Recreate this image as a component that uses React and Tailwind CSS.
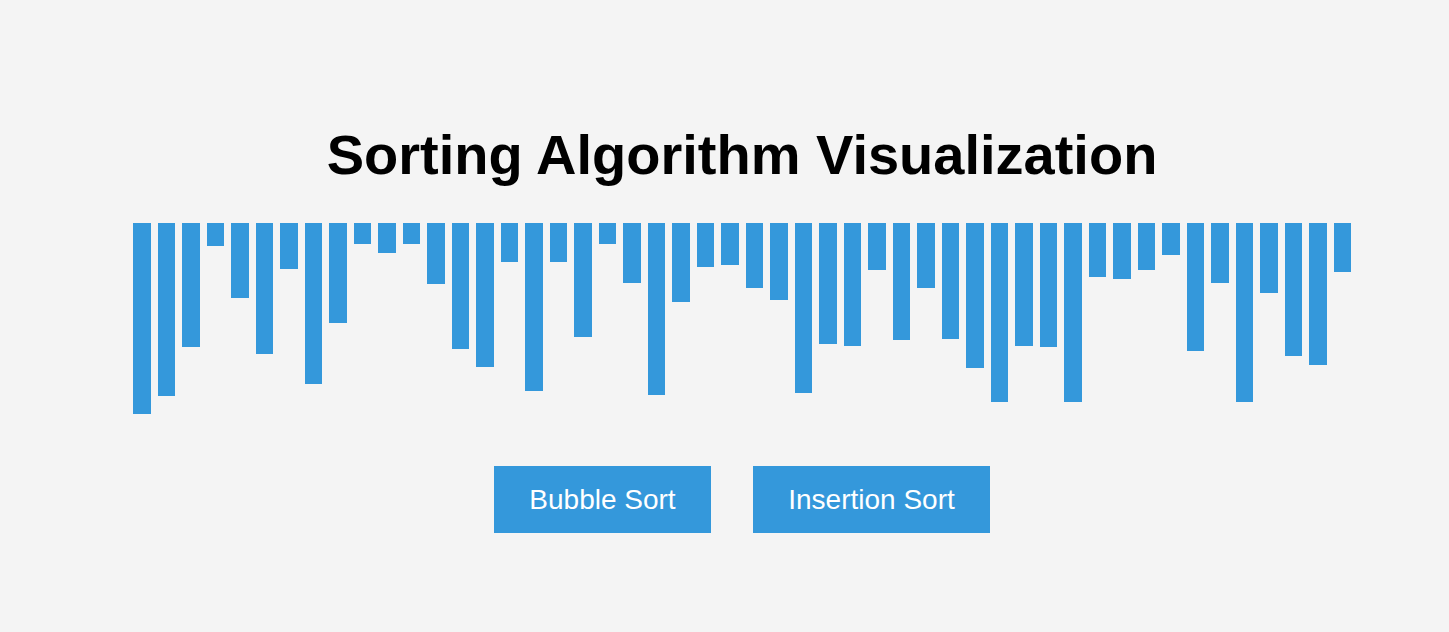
const BARS = [
  191, 173, 124, 23, 75, 131, 46, 161, 100, 21,
  30, 21, 61, 126, 144, 39, 168, 39, 114, 21,
  60, 172, 79, 44, 42, 65, 77, 170, 121, 123,
  47, 117, 65, 116, 145, 179, 123, 124, 179, 54,
  56, 47, 32, 128, 60, 179, 70, 133, 142, 49,
];

export default function App() {
  return (
    <div className="min-h-[632px] bg-[#f4f4f4] pl-[35px] pt-[123px] font-['Liberation_Sans',Arial,sans-serif] text-black">
      <h1 className="text-center text-[56px] font-bold leading-[64px]">
        Sorting Algorithm Visualization
      </h1>

      <div className="mt-[36px] flex items-start justify-center gap-[7px]">
        {BARS.map((h, i) => (
          <div key={i} className="w-[17.5px] bg-[#3498db]" style={{ height: h }} />
        ))}
      </div>

      <div className="mt-[52px] flex justify-center gap-[42px]">
        <button className="w-[217px] bg-[#3498db] py-[17.5px] text-[28px] leading-[32px] text-white">
          Bubble Sort
        </button>
        <button className="w-[237px] bg-[#3498db] py-[17.5px] text-[28px] leading-[32px] text-white">
          Insertion Sort
        </button>
      </div>
    </div>
  );
}
